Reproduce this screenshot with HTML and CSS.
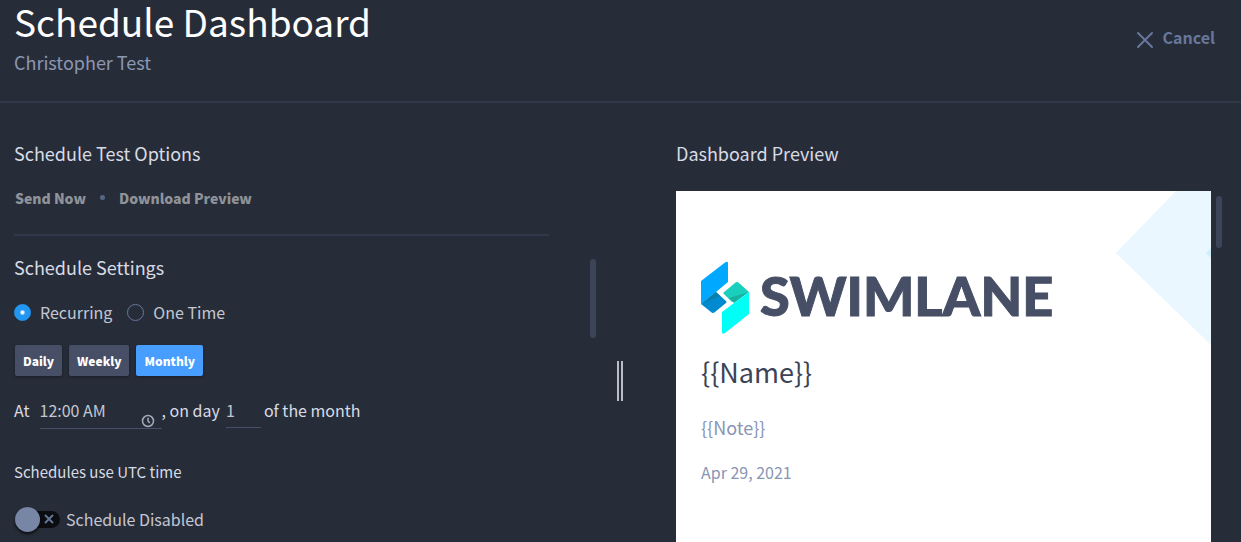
FILE: index.html
```html
<!DOCTYPE html>
<html lang="en">
<head>
<meta charset="utf-8">
<title>Schedule Dashboard</title>
<link rel="stylesheet" href="styles.css">
</head>
<body>
<header class="page-header">
  <div class="heading">
    <h1 class="title">Schedule Dashboard</h1>
    <p class="subtitle">Christopher Test</p>
  </div>
  <button class="cancel" type="button">
    <svg class="cancel-icon" viewBox="0 0 18 18" aria-hidden="true"><path d="M2 2L16 16M16 2L2 16" stroke="currentColor" stroke-width="2" stroke-linecap="round"/></svg>
    <span>Cancel</span>
  </button>
</header>
<main class="panes">
  <section class="pane pane-options">
    <h2 class="section-title">Schedule Test Options</h2>
    <div class="actions">
      <button class="text-button" type="button">Send Now</button>
      <span class="dot"></span>
      <button class="text-button" type="button">Download Preview</button>
    </div>
    <hr class="rule">
    <div class="scroll-row">
      <form class="settings">
        <h2 class="section-title">Schedule Settings</h2>
        <div class="radios">
          <label class="radio-label"><input class="radio" type="radio" name="mode" checked>Recurring</label>
          <label class="radio-label"><input class="radio" type="radio" name="mode">One Time</label>
        </div>
        <div class="periods">
          <button class="period" type="button">Daily</button>
          <button class="period" type="button">Weekly</button>
          <button class="period period-active" type="button">Monthly</button>
        </div>
        <div class="when">
          <label for="time">At</label>
          <span class="time-field">
            <input class="time-input" id="time" type="text" value="12:00 AM">
            <svg class="clock" viewBox="0 0 14 14" aria-hidden="true"><circle cx="7" cy="7" r="5.5" fill="none" stroke="currentColor" stroke-width="1.5"/><path d="M7 3.8V7L8.800 9" fill="none" stroke="currentColor" stroke-width="1.5"/></svg>
          </span>
          <label for="day">, on day</label>
          <input class="day-input" id="day" type="text" value="1">
          <span class="when-end">of the month</span>
        </div>
        <p class="utc">Schedules use UTC time</p>
        <label class="toggle-label">
          <span class="toggle">
            <input class="toggle-input" type="checkbox">
            <svg class="toggle-x" viewBox="0 0 10 10" aria-hidden="true"><path d="M1 1L9 9M9 1L1 9" stroke="currentColor" stroke-width="1.8"/></svg>
          </span>
          Schedule Disabled
        </label>
      </form>
      <div class="thumb thumb-settings"></div>
    </div>
  </section>
  <div class="splitter"></div>
  <section class="pane pane-preview">
    <h2 class="section-title">Dashboard Preview</h2>
    <div class="preview-row">
      <article class="paper">
        <svg class="corner" viewBox="0 0 96 156" aria-hidden="true">
          <path d="M61 0H96V154L1 62Z" fill="#eaf7ff"/>
          <path d="M96 57L91 62L96 67Z" fill="#d0effd"/>
        </svg>
        <svg class="logo" viewBox="0 0 352 74" role="img" aria-label="Swimlane">
          <path d="M0 20L24 1.500Q27 0 27 2V21L15 31L0 43Z" fill="#00a9ff"/>
          <path d="M0 43L15 31L25 40Q26 41 25 42L14 51Q12 53 10 51Z" fill="#008bd1"/>
          <path d="M0 43L15 31L19 35Z" fill="#087fac"/>
          <path d="M22 32L34 22Q36 20 38 22L48 31L31 41Z" fill="#1bcfbd"/>
          <path d="M28 37L48 31L33 42Z" fill="#18b29f"/>
          <path d="M48 31V53L24 72Q21 74 21 71V51L33 42Z" fill="#00fff5"/>
          <text class="wordmark" x="59" y="55">SWIMLANE</text>
        </svg>
        <h3 class="name">{{Name}}</h3>
        <p class="note">{{Note}}</p>
        <p class="date">Apr 29, 2021</p>
      </article>
      <div class="thumb thumb-preview"></div>
    </div>
  </section>
</main>
</body>
</html>
```
FILE: styles.css
```css
* { box-sizing: border-box; }
body {
  margin: 0;
  height: 100vh;
  overflow: hidden;
  display: flex;
  flex-direction: column;
  background: #272d38;
  color: #d8dbe5;
  font-family: "Noto Sans CJK SC", "Noto Sans", sans-serif;
  font-size: 16px;
  line-height: 24px;
}
h1, h2, h3, p { margin: 0; font-weight: 400; }
button { font-family: inherit; border: 0; padding: 0; background: none; cursor: pointer; }
input { font-family: inherit; color: inherit; margin: 0; }

.page-header {
  display: flex;
  justify-content: space-between;
  align-items: flex-start;
  padding: 0 26px 24px 14px;
  border-bottom: 2px solid #31384a;
}
.title { color: #fff; font-size: 37px; line-height: 42px; }
.subtitle { padding-top: 6px; color: #8c97b2; font-size: 18px; line-height: 29px; }
.cancel {
  display: flex;
  align-items: center;
  gap: 9px;
  margin-top: 25px;
  color: #67779b;
  font-size: 16px;
  font-weight: 700;
  line-height: 24px;
}
.cancel-icon { width: 18px; height: 18px; margin-top: 5px; }

.panes { flex: 1; min-height: 0; display: grid; grid-template-columns: 1fr 7px 1fr; }
.pane { display: flex; flex-direction: column; min-height: 0; padding-top: 37px; }
.pane-options { padding-left: 14px; padding-right: 21px; }
.pane-preview { padding-left: 52px; padding-right: 19px; }
.section-title { font-size: 18px; line-height: 26px; }
.actions { display: flex; align-items: center; gap: 14px; margin: 20px 0 24px 1px; }
.text-button { color: #8f9299; font-size: 14px; font-weight: 900; line-height: 24px; }
.dot { width: 5px; height: 5px; margin-bottom: 2px; border-radius: 50%; background: #566786; }
.rule { width: auto; height: 2px; margin: 0 47px 0 0; border: 0; background: #31384a; }
.scroll-row { display: flex; justify-content: space-between; padding-top: 18px; }
.thumb { width: 6px; border-radius: 3px; background: #3c4457; flex: none; }
.thumb-settings { height: 79px; margin-top: 5px; }
.thumb-preview { height: 52px; margin-top: 5px; }

.radios { display: flex; gap: 15px; margin-top: 20px; }
.radio-label { display: flex; align-items: center; gap: 9px; font-size: 16px; line-height: 24px; color: #c3c7d3; }
.radio { appearance: none; width: 17px; height: 17px; border: 1px solid #67779b; border-radius: 50%; }
.radio:checked { border-color: #2196f3; background: radial-gradient(circle, #fff 1px, #2196f3 3px); }
.periods { display: flex; gap: 7px; margin: 21px 0 0 1px; }
.period {
  padding: 0 8px;
  border-radius: 2px;
  background: #474f66;
  color: #fff;
  font-size: 12px;
  font-weight: 900;
  line-height: 31px;
  box-shadow: 0 1px 3px #191d26;
}
.period-active { background: #479eff; }
.when { display: flex; align-items: flex-start; margin-top: 22px; font-size: 16px; line-height: 24px; }
.time-field { display: flex; align-items: flex-end; width: 122px; height: 31px; margin-left: 10px; border-bottom: 1px solid #474f66; }
.time-input { flex: 1; min-width: 0; height: 30px; padding: 0 0 6px; border: 0; background: none; font-size: 16px; color: #c3c7d3; }
.clock { width: 14px; height: 14px; margin-right: 7px; color: #a5adbf; }
.day-input { width: 35px; height: 30px; margin-left: 6px; padding: 0 0 6px; border: 0; border-bottom: 1px solid #474f66; background: none; font-size: 16px; color: #c3c7d3; }
.when-end { margin-left: 3px; }
.utc { margin-top: 31px; font-size: 15px; line-height: 24px; }
.toggle-label { display: flex; align-items: center; gap: 6px; margin: 22px 0 0 1px; font-size: 16px; line-height: 26px; color: #c3c7d3; }
.toggle { position: relative; display: flex; align-items: center; width: 45px; height: 26px; }
.toggle-input { appearance: none; width: 45px; height: 17px; border-radius: 9px; background: #0b0d11; }
.toggle-input::before { content: ""; position: absolute; left: 0; top: 1px; width: 25px; height: 25px; border-radius: 50%; background: #7886a6; box-shadow: 0 2px 3px #0b0d11; }
.toggle-x { position: absolute; right: 6px; top: 8px; width: 10px; height: 10px; color: #67779b; }

.splitter { align-self: center; width: 6px; height: 40px; margin-bottom: -116px; border: solid #b9bdc9; border-width: 0 2px; }

.preview-row { flex: 1; display: flex; gap: 5px; min-height: 0; margin-top: 25px; }
.paper { position: relative; flex: 1; padding: 70px 25px 0; overflow: hidden; background: #fff; color: #8895b3; }
.corner { position: absolute; top: 0; right: 0; width: 96px; height: 156px; }
.logo { display: block; width: 352px; height: 74px; }
.wordmark { font-family: Lato, sans-serif; font-size: 54px; font-weight: 900; fill: #474f66; stroke: #474f66; stroke-width: 1px; }
.name { margin-top: 17px; color: #3c4457; font-size: 27px; line-height: 40px; }
.note { margin-top: 22px; font-size: 18px; line-height: 26px; }
.date { margin-top: 20px; font-size: 16px; line-height: 24px; }
```
